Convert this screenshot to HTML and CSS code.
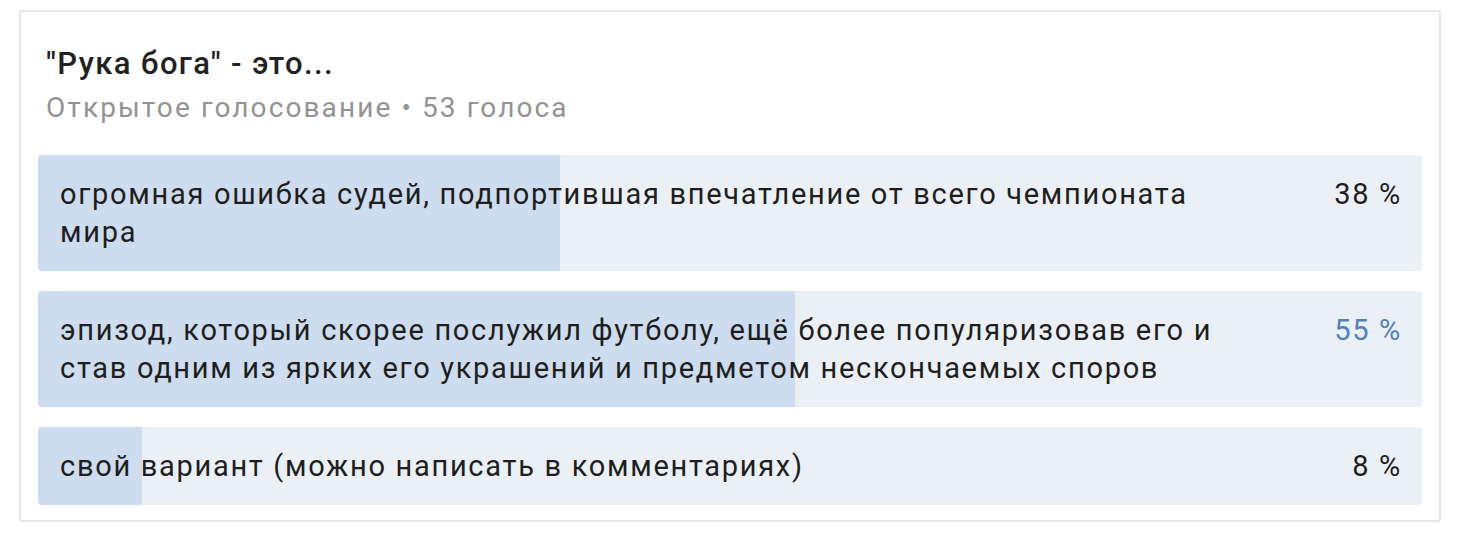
FILE: index.html
```html
<!DOCTYPE html>
<html lang="ru">
<head>
<meta charset="utf-8">
<link rel="stylesheet" href="styles.css">
</head>
<body>
<div class="poll">
  <div class="poll-title">"Рука бога" - это...</div>
  <div class="poll-meta">Открытое голосование • 53 голоса</div>
  <div class="options">
    <div class="option">
      <div class="fill" style="width: 37.7%"></div>
      <div class="option-text">огромная ошибка судей, подпортившая впечатление от всего чемпионата мира</div>
      <div class="option-pct">38 %</div>
    </div>
    <div class="option">
      <div class="fill" style="width: 54.7%"></div>
      <div class="option-text">эпизод, который скорее послужил футболу, ещё более популяризовав его и став одним из ярких его украшений и предметом нескончаемых споров</div>
      <div class="option-pct chosen">55 %</div>
    </div>
    <div class="option">
      <div class="fill" style="width: 7.5%"></div>
      <div class="option-text">свой вариант (можно написать в комментариях)</div>
      <div class="option-pct">8 %</div>
    </div>
  </div>
</div>
</body>
</html>
```

FILE: styles.css
```css
* { box-sizing: border-box; }
html, body { margin: 0; padding: 0; background: #ffffff; }
body {
  font-family: Roboto, "Noto Sans", "Liberation Sans", sans-serif;
  color: #222222;
  padding: 10px 19px 0 19px;
  width: 1460px;
}
.poll {
  width: 1422px;
  height: 512px;
  border: 2px solid #e6e7eb;
  border-radius: 3px;
  padding: 30px 17px 15px 17px;
  background: #fff;
}
.poll-title {
  font-size: 31px;
  font-weight: 500;
  line-height: 44px;
  letter-spacing: 1.4px;
  padding-left: 8px;
  color: #222;
}
.poll-meta {
  margin-top: 4px;
  font-size: 28px;
  line-height: 36px;
  letter-spacing: 2.1px;
  padding-left: 8px;
  color: #939393;
}
.options {
  margin-top: 29px;
  display: flex;
  flex-direction: column;
  gap: 20px;
}
.option {
  position: relative;
  display: flex;
  align-items: flex-start;
  background: #ebf0f7;
  border-radius: 4px;
  padding: 20px 20px 20px 22px;
  overflow: hidden;
}
.fill {
  position: absolute;
  left: 0; top: 0; bottom: 0;
  background: #cddcef;
}
.option-text {
  position: relative;
  flex: 1;
  font-size: 29px;
  line-height: 38px;
  letter-spacing: 1.7px;
  color: #1e1e1e;
  padding-right: 110px;
}
.option-pct {
  position: relative;
  font-size: 29px;
  line-height: 38px;
  letter-spacing: 1.7px;
  color: #1e1e1e;
  white-space: nowrap;
}
.option-pct.chosen { color: #5181b8; }
```
